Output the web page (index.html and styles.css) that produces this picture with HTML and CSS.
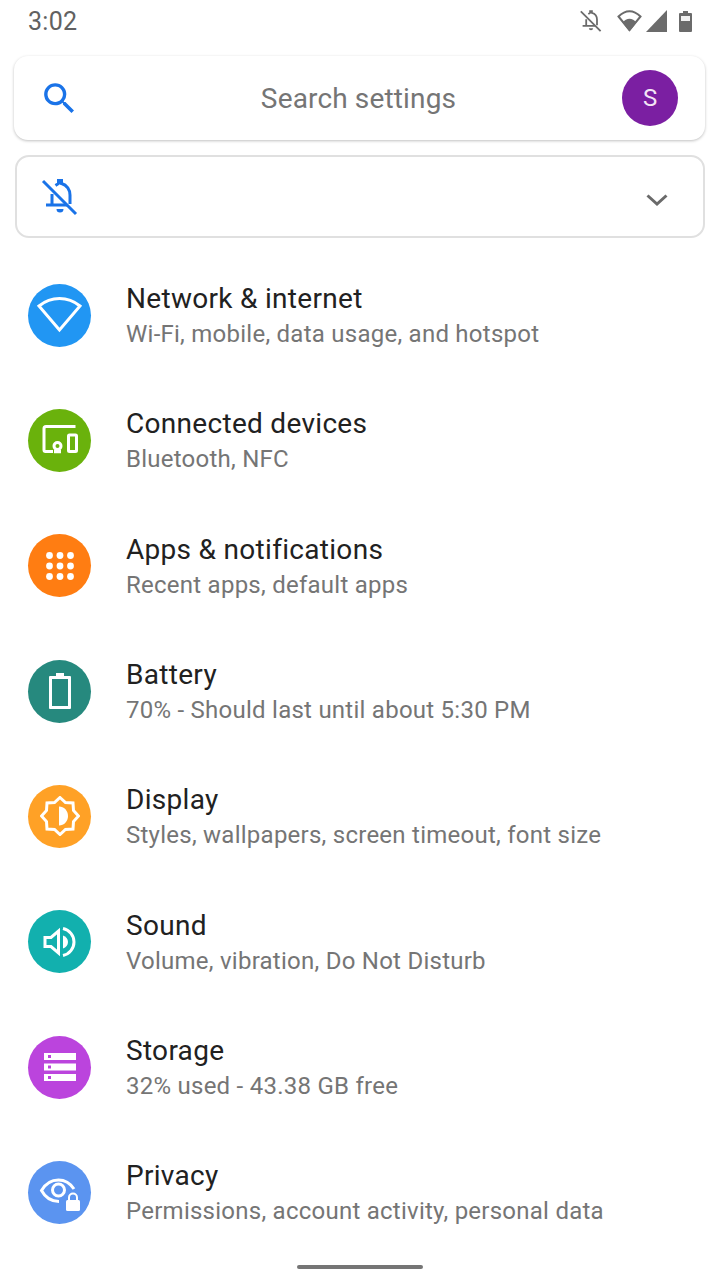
FILE: index.html
```html
<!DOCTYPE html>
<html lang="en">
<head>
    <meta charset="UTF-8">
    <meta name="viewport" content="width=device-width, initial-scale=1.0">
    <title>Settings</title>
    <link rel="stylesheet" href="styles.css">
</head>
<body>
    <!-- Status bar -->
    <div class="status-bar">
        <span class="clock">3:02</span>
        <div class="status-icons">
            <svg class="status-bell" width="24" height="24" viewBox="0 0 40 40" fill="none" stroke="#6b6b6b" stroke-width="3"><path d="M15.500 8.500C17 7.500 18 7 18.500 6.500V3.500h3v3C27 8 30 13 30 18v9"/><path d="M12 17v11M6 28h21"/><path d="M16.500 32h7a3.500 3.500 0 0 1-7 0z" fill="#6b6b6b" stroke="none"/><path d="M3 4l33 33"/></svg>
            <svg class="status-wifi" width="25" height="22" viewBox="0 0 25 22"><path d="M12.500 20 1.500 6.500C4.500 3.500 8.500 1.200 12.500 1.200s8 2.300 11 5.300z" fill="none" stroke="#6b6b6b" stroke-width="2"/><path d="M12.500 21.500 5.500 12.500C7.500 10 10 8.700 12.500 8.700s5 1.300 7 3.800z" fill="#6b6b6b"/></svg>
            <svg class="status-signal" width="21" height="22" viewBox="0 0 21 22"><path d="M21 0V22H0z" fill="#6b6b6b"/></svg>
            <svg class="status-battery" width="13" height="21" viewBox="0 0 13 21"><path d="M4 0h5v2h3a1 1 0 0 1 1 1v17a1 1 0 0 1-1 1H1a1 1 0 0 1-1-1V3a1 1 0 0 1 1-1h3z" fill="#6b6b6b"/><rect x="2" y="5" width="9" height="5" fill="#f2f2f2"/></svg>
        </div>
    </div>

    <!-- Search -->
    <div class="search-card">
        <svg class="search-icon" width="41" height="41" viewBox="0 0 24 24"><path d="M15.500 14h-.79l-.28-.27A6.470 6.470 0 0 0 16 9.500 6.500 6.500 0 1 0 9.500 16c1.610 0 3.090-.59 4.230-1.570l.27.28v.79l5 4.990L20.490 19l-4.990-5zm-6 0C7.010 14 5 11.990 5 9.500S7.010 5 9.500 5 14 7.010 14 9.500 11.990 14 9.500 14z" fill="#1a73e8"/></svg>
        <span class="search-text">Search settings</span>
        <div class="avatar">S</div>
    </div>

    <!-- Do not disturb suggestion -->
    <div class="dnd-card">
        <svg class="dnd-icon" width="40" height="40" viewBox="0 0 40 40" fill="none" stroke="#1a73e8" stroke-width="3"><path d="M15.500 8.500C17 7.500 18 7 18.500 6.500V3.500h3v3C27 8 30 13 30 18v9"/><path d="M12 17v11M6 28h21"/><path d="M16.500 32h7a3.500 3.500 0 0 1-7 0z" fill="#1a73e8" stroke="none"/><path d="M3 4l33 33"/></svg>
        <svg class="chevron" width="24" height="14" viewBox="0 0 24 14"><path d="M2.500 2.500 12 11l9.500-8.500" fill="none" stroke="#6a6a6a" stroke-width="3"/></svg>
    </div>

    <!-- Settings list -->
    <div class="settings-list">
        <div class="row">
            <div class="circle blue">
                <svg width="48" height="38" viewBox="0 0 48 38"><path d="M23.500 34 3 10C8.500 5.500 15.500 2.500 23.500 2.500S38.500 5.500 44 10z" fill="none" stroke="#fff" stroke-width="3"/></svg>
            </div>
            <div class="row-text">
                <div class="row-title">Network &amp; internet</div>
                <div class="row-sub">Wi-Fi, mobile, data usage, and hotspot</div>
            </div>
        </div>
        <div class="row">
            <div class="circle green">
                <svg width="38" height="38" viewBox="0 0 38 38" fill="none" stroke="#fff" stroke-width="3"><path d="M34.500 5.500H5a2 2 0 0 0-2 2V29a1.500 1.500 0 0 0 1.500 1.500H12"/><circle cx="16.500" cy="25" r="3.500"/><path d="M13 30.500h7" stroke-width="3.500"/><rect x="27.500" y="14" width="8" height="16.500" rx="1"/></svg>
            </div>
            <div class="row-text">
                <div class="row-title">Connected devices</div>
                <div class="row-sub">Bluetooth, NFC</div>
            </div>
        </div>
        <div class="row">
            <div class="circle orange">
                <svg width="30" height="30" viewBox="0 0 30 30" fill="#fff"><circle cx="4.500" cy="4.500" r="3.400"/><circle cx="15" cy="4.500" r="3.400"/><circle cx="25.500" cy="4.500" r="3.400"/><circle cx="4.500" cy="15" r="3.400"/><circle cx="15" cy="15" r="3.400"/><circle cx="25.500" cy="15" r="3.400"/><circle cx="4.500" cy="25.500" r="3.400"/><circle cx="15" cy="25.500" r="3.400"/><circle cx="25.500" cy="25.500" r="3.400"/></svg>
            </div>
            <div class="row-text">
                <div class="row-title">Apps &amp; notifications</div>
                <div class="row-sub">Recent apps, default apps</div>
            </div>
        </div>
        <div class="row">
            <div class="circle teal">
                <svg width="22" height="36" viewBox="0 0 22 36"><path d="M7 0h8v3h6a1 1 0 0 1 1 1v31a1 1 0 0 1-1 1H1a1 1 0 0 1-1-1V4a1 1 0 0 1 1-1h6zM3 6v27h16V6z" fill="#fff" fill-rule="evenodd"/></svg>
            </div>
            <div class="row-text">
                <div class="row-title">Battery</div>
                <div class="row-sub">70% - Should last until about 5:30 PM</div>
            </div>
        </div>
        <div class="row">
            <div class="circle amber">
                <svg width="40" height="40" viewBox="0 0 40 40"><path d="M20 1.500 25.500 6.500 33 7 33.500 14.500 38.500 20 33.500 25.500 33 33 25.500 33.500 20 38.500 14.500 33.500 7 33 6.500 25.500 1.500 20 6.500 14.500 7 7 14.500 6.500z" fill="none" stroke="#fff" stroke-width="3"/><path d="M19 10.500c5 0 9 4.200 9 9.500s-4 9.500-9 9.500z" fill="#fff"/></svg>
            </div>
            <div class="row-text">
                <div class="row-title">Display</div>
                <div class="row-sub">Styles, wallpapers, screen timeout, font size</div>
            </div>
        </div>
        <div class="row">
            <div class="circle cyan">
                <svg width="34" height="34" viewBox="0 0 34 34"><path d="M2 12.500h6l7.500-6.500v22l-7.500-6.500H2z" fill="none" stroke="#fff" stroke-width="3"/><path d="M20 10.500c3 1 5 3.500 5 6.500s-2 5.500-5 6.500z" fill="#fff"/><path d="M20 3.500C26.500 5 31 10.500 31 17s-4.500 12-11 13.500" fill="none" stroke="#fff" stroke-width="3"/></svg>
            </div>
            <div class="row-text">
                <div class="row-title">Sound</div>
                <div class="row-sub">Volume, vibration, Do Not Disturb</div>
            </div>
        </div>
        <div class="row">
            <div class="circle purple">
                <svg width="32" height="28" viewBox="0 0 32 28" fill="#fff" fill-rule="evenodd"><path d="M0 0h32v7H0zM4 2v3h3V2z"/><path d="M0 10.500h32v7H0zM4 12.500v3h3v-3z"/><path d="M0 21h32v7H0zM4 23v3h3v-3z"/></svg>
            </div>
            <div class="row-text">
                <div class="row-title">Storage</div>
                <div class="row-sub">32% used - 43.38 GB free</div>
            </div>
        </div>
        <div class="row">
            <div class="circle periwinkle">
                <svg width="44" height="40" viewBox="0 0 44 40"><path d="M36 17C32 11 27 8 20.500 8 13 8 7 12.500 3.500 18.500 7 25 13.500 29.500 21 29.500" fill="none" stroke="#fff" stroke-width="3"/><circle cx="20.500" cy="18" r="6" fill="none" stroke="#fff" stroke-width="3"/><path d="M31 28v-2.500a4 4 0 0 1 8 0V28" fill="none" stroke="#fff" stroke-width="2"/><rect x="28" y="28" width="14" height="11" rx="1.500" fill="#fff"/></svg>
            </div>
            <div class="row-text">
                <div class="row-title">Privacy</div>
                <div class="row-sub">Permissions, account activity, personal data</div>
            </div>
        </div>
    </div>

    <div class="home-pill"></div>
</body>
</html>
```

FILE: styles.css
```css
body {
    font-family: Roboto, Arial, sans-serif;
    margin: 0;
    padding: 0;
    background-color: #ffffff;
    height: 1280px;
    overflow: hidden;
}

.status-bar {
    display: flex;
    justify-content: space-between;
    align-items: center;
    height: 42px;
    padding: 0 28px;
}

.clock {
    font-size: 25px;
    letter-spacing: 0.3px;
    color: #616161;
}

.status-icons {
    display: flex;
    align-items: center;
}

.status-wifi {
    margin-left: 14px;
}

.status-signal {
    margin-left: 4px;
}

.status-battery {
    margin-left: 12px;
}

.search-card {
    display: grid;
    grid-template-columns: 1fr auto 1fr;
    align-items: center;
    box-sizing: border-box;
    height: 84px;
    margin: 14px 15px 0 14px;
    padding: 0 27px 0 25px;
    background: #ffffff;
    border-radius: 14px;
    box-shadow: 0 1px 3px rgba(0, 0, 0, 0.25);
}

.search-text {
    font-size: 28px;
    letter-spacing: 0.15px;
    color: #757575;
}

.avatar {
    justify-self: end;
    width: 56px;
    height: 56px;
    border-radius: 50%;
    background-color: #7b1fa2;
    color: #f3e5f5;
    font-size: 24px;
    display: flex;
    align-items: center;
    justify-content: center;
}

.dnd-card {
    display: flex;
    align-items: center;
    justify-content: space-between;
    box-sizing: border-box;
    height: 83px;
    margin: 15px 15px 0 15px;
    padding: 0 34px 0 23px;
    border: 2px solid #e0e0e0;
    border-radius: 14px;
}

.chevron {
    margin-top: 6px;
}

.settings-list {
    margin-top: 14.5px;
}

.row {
    display: flex;
    align-items: center;
    height: 125.33px;
    padding-left: 28px;
}

.circle {
    width: 63px;
    height: 63px;
    border-radius: 50%;
    display: flex;
    align-items: center;
    justify-content: center;
    flex-shrink: 0;
}

.blue { background-color: #2196f3; }
.green { background-color: #6ab20c; }
.orange { background-color: #ff7d12; }
.teal { background-color: #26897e; }
.amber { background-color: #ffa126; }
.cyan { background-color: #12b0ae; }
.purple { background-color: #bb44dd; }
.periwinkle { background-color: #5b94f0; }

.row-text {
    margin-left: 35px;
    padding-top: 4px;
}

.row-title {
    font-size: 28px;
    letter-spacing: 0.3px;
    line-height: 33px;
    margin-bottom: 2px;
    color: #212121;
}

.row-sub {
    font-size: 24px;
    letter-spacing: 0.25px;
    line-height: 35px;
    color: #757575;
}

.home-pill {
    position: absolute;
    left: 297px;
    top: 1265px;
    width: 126px;
    height: 4px;
    border-radius: 2px;
    background-color: #757575;
}
```
